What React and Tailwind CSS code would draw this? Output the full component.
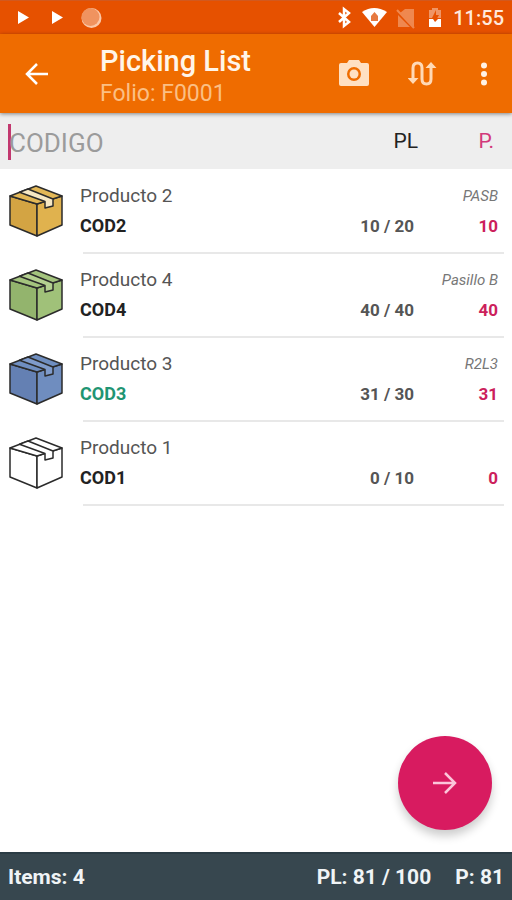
import { useState } from "react";

const products = [
  { name: "Producto 2", code: "COD2", picked: 10, total: 20, place: "PASB", left: "#d3a443", right: "#e0b24e", top: "#e3b857", tape: "#f6e8c4", codeClass: "text-[#222222]" },
  { name: "Producto 4", code: "COD4", picked: 40, total: 40, place: "Pasillo B", left: "#93b46d", right: "#a0c179", top: "#a4c47e", tape: "#b4d090", codeClass: "text-[#222222]" },
  { name: "Producto 3", code: "COD3", picked: 31, total: 30, place: "R2L3", left: "#6480b3", right: "#6f8dbf", top: "#6f8ec0", tape: "#7f9bcb", codeClass: "text-[#1f9573]" },
  { name: "Producto 1", code: "COD1", picked: 0, total: 10, place: "", left: "#ffffff", right: "#ffffff", top: "#ffffff", tape: "#ffffff", codeClass: "text-[#222222]" },
];

function BoxIcon({ left, right, top, tape }) {
  return (
    <svg viewBox="0 0 56 54" className="h-[54px] w-14 shrink-0" stroke="#2b2b2b" strokeWidth="1.500" strokeLinejoin="round" aria-hidden="true">
      <path d="M2 12 29 20 29 52 2 41Z" fill={left} />
      <path d="M54 12 29 20 29 52 54 41Z" fill={right} />
      <path d="M28 2 54 12 29 20 2 12Z" fill={top} />
      <path d="M11.500 8.300 37 17.500V24L45 22V15L20 5Z" fill={tape} />
    </svg>
  );
}

function StatusBar() {
  return (
    <div className="flex h-[34px] items-center justify-between border-t border-[#d2591f] bg-[#e65100] pl-4 pr-2">
      <svg viewBox="0 0 90 24" className="h-6 w-[90px]" fill="#fff" aria-hidden="true">
        <path d="M2 5 13 11.500 2 18ZM36 5 47 11.500 36 18Z" />
        <circle cx="75.500" cy="12" r="10" fill="#fbc8a8" />
        <circle cx="74.500" cy="11" r="9" fill="#f0935f" />
      </svg>
      <div className="flex items-center gap-[11px]">
        <svg viewBox="0 0 106 24" className="h-6 w-[106px]" aria-hidden="true">
          <path d="M3 7 13 16 8 20V3L13 7 3 16" fill="none" stroke="#fff" strokeWidth="2.500" />
          <path d="M26 6Q38-2 51 6L38.500 21Z" fill="#fff" />
          <path d="M38.500 6 42 10V15H35V10Z" fill="#e67a41" />
          <path d="M69 3H78V21L64 7Z M62 9V21H74Z" fill="#ef884f" />
          <path d="M61 4 78 22" stroke="#ef884f" strokeWidth="2" />
          <path d="M93 4H96V2H102V4H105V12H93Z" fill="#ef9565" />
          <path d="M100 4 96 12H99V16L103 9H100Z" fill="#e65100" />
          <path d="M93 13H97L99 16 102 13H105V21H93Z" fill="#fff" />
        </svg>
        <span className="text-[20px] leading-6 font-medium text-[#ffe9dc]">11:55</span>
      </div>
    </div>
  );
}

function AppBar() {
  return (
    <header className="relative z-10 flex h-[79px] items-center bg-[#ef6c00] pr-4 shadow-[0_1px_4px_rgba(0,0,0,0.45)]">
      <button type="button" aria-label="Volver" className="ml-5 flex size-8 items-center justify-center">
        <svg viewBox="0 0 24 24" className="size-6" fill="none" stroke="#fff" strokeWidth="2.500" aria-hidden="true">
          <path d="M24 12H3M13 2 3 12 13 22" />
        </svg>
      </button>
      <div className="ml-12 flex-1 pt-[6px]">
        <h1 className="text-[29px] leading-[34px] font-medium text-[#fff5e9]">Picking List</h1>
        <p className="text-[23px] leading-8 text-[#fbbf84]">Folio: F0001</p>
      </div>
      <div className="flex items-center">
        <button type="button" aria-label="Cámara" className="flex w-8 justify-center">
          <svg viewBox="0 0 32 28" className="h-7 w-8" aria-hidden="true">
            <path fillRule="evenodd" d="M11 0H21L23 3H29Q31 3 31 5V24Q31 26 29 26H3Q1 26 1 24V5Q1 3 3 3H9ZM16 7A7 7 0 1 0 16 21 7 7 0 1 0 16 7Z" fill="#ffe0c2" />
            <circle cx="16" cy="14" r="4.500" fill="#ffe0c2" />
          </svg>
        </button>
        <button type="button" aria-label="Ordenar" className="ml-[38px] flex w-8 justify-center">
          <svg viewBox="0 0 32 28" className="h-7 w-8" aria-hidden="true">
            <path d="M5 19V8Q5 3 9.500 3T14 8V19Q14 24 18.500 24T23 19V7" fill="none" stroke="#ffd9b5" strokeWidth="3" />
            <path d="M-.5 18H10.500L5 24ZM17.500 8H28.500L23 2Z" fill="#ffd9b5" />
          </svg>
        </button>
        <button type="button" aria-label="Más opciones" className="ml-8 flex w-6 justify-center">
          <svg viewBox="0 0 8 26" className="h-[26px] w-2" fill="#fff2e5" aria-hidden="true">
            <circle cx="4" cy="4.500" r="3" />
            <circle cx="4" cy="13" r="3" />
            <circle cx="4" cy="21.500" r="3" />
          </svg>
        </button>
      </div>
    </header>
  );
}

export default function App() {
  const [code, setCode] = useState("");
  return (
    <div className="relative flex min-h-screen flex-col bg-white font-[Roboto,sans-serif]">
      <StatusBar />
      <AppBar />
      <div className="flex h-14 items-center bg-[#eeeeee] pt-[2px] pr-[18px] pl-2 text-[21px]">
        <span className="h-9 w-[3px] bg-[#c2386f]" aria-hidden="true" />
        <input
          aria-label="Código"
          placeholder="CODIGO"
          value={code}
          onChange={(e) => setCode(e.target.value)}
          className="-ml-[2px] min-w-0 flex-1 bg-transparent pt-[2px] text-[26px] text-[#333333] outline-none placeholder:text-[#9b9b9b]"
        />
        <span className="text-[#222222]">PL</span>
        <span className="w-[76px] text-right text-[#d2397b]">P.</span>
      </div>
      <main className="flex-1 pt-px">
        <ul>
          {products.map((p) => (
            <li key={p.code} className="flex h-[84px] px-2">
              <div className="pt-[14px]">
                <BoxIcon left={p.left} right={p.right} top={p.top} tape={p.tape} />
              </div>
              <div className="ml-4 flex flex-1 flex-col">
                <div className="flex flex-1 flex-col justify-center pr-[6px]">
                  <div className="flex items-center justify-between">
                    <span className="text-[19px] leading-[30px] text-[#555555]">{p.name}</span>
                    <span className="text-[15px] leading-[30px] text-[#777777] italic">{p.place}</span>
                  </div>
                  <div className="flex items-center text-[17px] leading-[30px] font-bold">
                    <span className={`flex-1 text-[18px] ${p.codeClass}`}>{p.code}</span>
                    <span className="text-[#555555]">{p.picked} / {p.total}</span>
                    <span className="w-[84px] text-right text-[#cc1f5c]">{p.picked}</span>
                  </div>
                </div>
                <div className="ml-[3px] h-[2px] bg-[#e8e8e8]" />
              </div>
            </li>
          ))}
        </ul>
      </main>
      <button
        type="button"
        aria-label="Continuar"
        className="absolute right-5 bottom-[70px] flex size-[94px] items-center justify-center rounded-full bg-[#d81b60] shadow-[0_6px_10px_rgba(0,0,0,0.2)]"
      >
        <svg viewBox="0 0 24 24" className="size-6" fill="none" stroke="#fbc6da" strokeWidth="2.500" aria-hidden="true">
          <path d="M0 12H22M12 2 22 12 12 22" />
        </svg>
      </button>
      <footer className="flex h-12 items-center border-t-2 border-[#2b3c45] bg-[#37474f] px-2 pt-[2px] text-[21px] font-bold text-[#f0f4f6]">
        <span className="flex-1">Items: 4</span>
        <span>PL: 81 / 100</span>
        <span className="ml-6">P: 81</span>
      </footer>
    </div>
  );
}
